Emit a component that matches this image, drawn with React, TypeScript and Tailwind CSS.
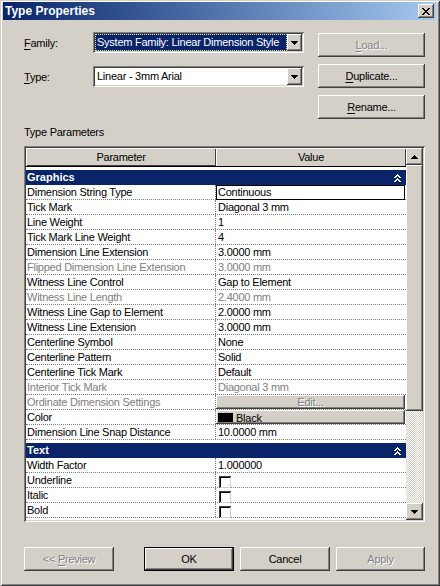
import React from "react";

const F = "font-['Liberation_Sans',Arial,sans-serif]";
const RAISED =
  "bg-[#d4d0c8] shadow-[inset_-1px_-1px_0_#404040,inset_1px_1px_0_#ffffff,inset_-2px_-2px_0_#808080]";
const SUNKEN =
  "shadow-[inset_1px_1px_0_#808080,inset_-1px_-1px_0_#ffffff,inset_2px_2px_0_#404040,inset_-2px_-2px_0_#d4d0c8]";
const DIS = "text-[#808080] [text-shadow:1px_1px_0_#ffffff]";

function DownTri() {
  return (
    <svg width="7" height="4" viewBox="0 0 7 4" shapeRendering="crispEdges">
      <path d="M0 0h7v1H0zM1 1h5v1H1zM2 2h3v1H2zM3 3h1v1H3z" fill="#000" />
    </svg>
  );
}

function UpTri() {
  return (
    <svg width="7" height="4" viewBox="0 0 7 4" shapeRendering="crispEdges">
      <path d="M3 0h1v1H3zM2 1h3v1H2zM1 2h5v1H1zM0 3h7v1H0z" fill="#000" />
    </svg>
  );
}

function CloseX() {
  return (
    <svg width="8" height="7" viewBox="0 0 8 7" shapeRendering="crispEdges">
      <path
        d="M0 0h2v1H0zM6 0h2v1H6zM1 1h2v1H1zM5 1h2v1H5zM2 2h4v1H2zM3 3h2v1H3zM2 4h4v1H2zM1 5h2v1H1zM5 5h2v1H5zM0 6h2v1H0zM6 6h2v1H6z"
        fill="#000"
      />
    </svg>
  );
}

function Chevrons() {
  return (
    <svg width="7" height="8" viewBox="0 0 7 8" shapeRendering="crispEdges">
      <path
        d="M3 0h1v1H3zM2 1h3v1H2zM1 2h2v1H1zM4 2h2v1H4zM0 3h2v1H0zM5 3h2v1H5zM3 4h1v1H3zM2 5h3v1H2zM1 6h2v1H1zM4 6h2v1H4zM0 7h2v1H0zM5 7h2v1H5z"
        fill="#fff"
      />
    </svg>
  );
}

type Row = {
  name: string;
  value?: string;
  dis?: boolean;
  kind?: "text" | "edit" | "color" | "check";
  focus?: boolean;
};

const graphics: Row[] = [
  { name: "Dimension String Type", value: "Continuous", focus: true },
  { name: "Tick Mark", value: "Diagonal 3 mm" },
  { name: "Line Weight", value: "1" },
  { name: "Tick Mark Line Weight", value: "4" },
  { name: "Dimension Line Extension", value: "3.0000 mm" },
  { name: "Flipped Dimension Line Extension", value: "3.0000 mm", dis: true },
  { name: "Witness Line Control", value: "Gap to Element" },
  { name: "Witness Line Length", value: "2.4000 mm", dis: true },
  { name: "Witness Line Gap to Element", value: "2.0000 mm" },
  { name: "Witness Line Extension", value: "3.0000 mm" },
  { name: "Centerline Symbol", value: "None" },
  { name: "Centerline Pattern", value: "Solid" },
  { name: "Centerline Tick Mark", value: "Default" },
  { name: "Interior Tick Mark", value: "Diagonal 3 mm", dis: true },
  { name: "Ordinate Dimension Settings", kind: "edit", dis: true },
  { name: "Color", kind: "color" },
  { name: "Dimension Line Snap Distance", value: "10.0000 mm" },
];

const textRows: Row[] = [
  { name: "Width Factor", value: "1.000000" },
  { name: "Underline", kind: "check" },
  { name: "Italic", kind: "check" },
  { name: "Bold", kind: "check" },
];

function Checkbox() {
  return (
    <div className="ml-[3px] mt-[3px] w-[12px] h-[12px] bg-white shadow-[inset_1px_1px_0_#404040,inset_-1px_-1px_0_#d4d0c8,inset_2px_2px_0_#000000]" />
  );
}

function GridRow({ r }: { r: Row }) {
  const txt = r.dis ? "text-[#808080]" : "text-black";
  let value: React.ReactNode = null;
  if (r.kind === "edit") {
    value = (
      <div className={`w-[189px] h-[14px] ${RAISED} text-center leading-[14px] ${DIS}`}>Edit...</div>
    );
  } else if (r.kind === "color") {
    value = (
      <div className={`w-[189px] h-[14px] ${RAISED} flex items-center pl-[2px]`}>
        <span className="w-[15px] h-[9px] bg-black" />
        <span className="ml-[3px] leading-[14px] pt-[1px]">Black</span>
      </div>
    );
  } else if (r.kind === "check") {
    value = <Checkbox />;
  } else {
    value = <div className={`pl-[2px] leading-[14px] whitespace-nowrap ${txt}`}>{r.value}</div>;
  }
  return (
    <div className="flex h-[15px] border-b border-dotted border-[#808080] bg-white">
      <div
        className={`w-[190px] shrink-0 border-r border-dotted border-[#808080] pl-[1px] leading-[14px] whitespace-nowrap overflow-hidden ${txt}`}
      >
        {r.name}
      </div>
      <div className="relative w-[190px] shrink-0">
        {value}
        {r.focus && <div className="absolute left-0 top-0 w-[189px] h-[15px] border border-black" />}
      </div>
    </div>
  );
}

function Category({ label }: { label: string }) {
  return (
    <div className="h-[18px] pt-[3px] bg-white">
      <div className="h-[15px] bg-[#0a246a] flex items-center justify-between pl-[1px] pr-[5px]">
        <span className="font-bold text-white leading-[15px] tracking-normal">{label}</span>
        <Chevrons />
      </div>
    </div>
  );
}

function Btn({
  children,
  className = "",
  disabled,
  def,
}: {
  children: React.ReactNode;
  className?: string;
  disabled?: boolean;
  def?: boolean;
}) {
  const sh = def
    ? "bg-[#d4d0c8] shadow-[inset_0_0_0_1px_#000000,inset_-2px_-2px_0_#404040,inset_2px_2px_0_#ffffff,inset_-3px_-3px_0_#808080]"
    : RAISED;
  return (
    <div className={`h-[24px] flex items-center justify-center ${sh} ${disabled ? DIS : "text-black"} ${className}`}>
      <span className="leading-[14px]">{children}</span>
    </div>
  );
}

function Combo({ text, selected }: { text: string; selected?: boolean }) {
  return (
    <div className={`w-[211px] h-[21px] bg-white ${SUNKEN} p-[2px] flex`}>
      {selected ? (
        <div className="flex-1 bg-[#0a246a] border border-dotted border-[#e8e2a8] text-white leading-[15px] pl-[1px] whitespace-nowrap overflow-hidden">
          {text}
        </div>
      ) : (
        <div className="flex-1 leading-[17px] pl-[2px] whitespace-nowrap overflow-hidden">{text}</div>
      )}
      <div className={`w-[15px] h-[17px] ${RAISED} flex items-center justify-center`}>
        <DownTri />
      </div>
    </div>
  );
}

function U({ children }: { children: React.ReactNode }) {
  return <span className="underline underline-offset-[2px]">{children}</span>;
}

export default function App() {
  return (
    <div
      className={`${F} text-[11px] tracking-[-0.25px] text-black w-[440px] h-[586px] bg-[#d4d0c8] shadow-[inset_1px_1px_0_#d4d0c8,inset_-1px_-1px_0_#404040,inset_2px_2px_0_#ffffff,inset_-2px_-2px_0_#808080] pt-[2px] pl-[3px] pr-[4px] overflow-hidden`}
    >
      {/* Title bar */}
      <div className="h-[18px] bg-linear-to-r from-[#0a246a] to-[#a6caf0] flex items-center justify-between pl-[2px] pr-[2px]">
        <span className="text-white font-bold text-[12px] tracking-normal leading-[18px]">Type Properties</span>
        <div className={`w-[16px] h-[14px] ${RAISED} flex items-center justify-center`}>
          <CloseX />
        </div>
      </div>

      <div className="pl-[21px] pr-[11px]">
        {/* Top section */}
        <div className="flex mt-[12px]">
          <div className="flex flex-col">
            <div className="flex items-center">
              <span className="w-[69px] leading-[14px]">
                <U>F</U>amily:
              </span>
              <Combo text="System Family: Linear Dimension Style" selected />
            </div>
            <div className="flex items-center mt-[13px]">
              <span className="w-[69px] leading-[14px]">
                <U>T</U>ype:
              </span>
              <Combo text="Linear - 3mm Arial" />
            </div>
          </div>
          <div className="ml-[14px] mt-[1px] flex flex-col gap-[7px] w-[107px]">
            <Btn disabled>
              <U>L</U>oad...
            </Btn>
            <Btn>
              <U>D</U>uplicate...
            </Btn>
            <Btn>
              <U>R</U>ename...
            </Btn>
          </div>
        </div>

        <div className="mt-[6px] leading-[14px]">Type Parameters</div>

        {/* Table */}
        <div className={`mt-[7px] h-[376px] bg-white ${SUNKEN} p-[2px] flex`}>
          <div className="w-[380px] flex flex-col overflow-hidden">
            <div className="flex h-[19px] border-b border-black shrink-0">
              <div className="w-[190px] bg-[#d4d0c8] shadow-[inset_1px_1px_0_#ffffff,inset_-1px_-1px_0_#404040] flex items-center justify-center leading-[14px]">
                Parameter
              </div>
              <div className="w-[190px] bg-[#d4d0c8] shadow-[inset_1px_1px_0_#ffffff,inset_-1px_0_0_#404040] flex items-center justify-center leading-[14px]">
                Value
              </div>
            </div>
            <Category label="Graphics" />
            {graphics.map((r) => (
              <GridRow key={r.name} r={r} />
            ))}
            <Category label="Text" />
            {textRows.map((r) => (
              <GridRow key={r.name} r={r} />
            ))}
          </div>
          <div className="w-[17px] flex flex-col">
            <div className={`h-[17px] ${RAISED} flex items-center justify-center`}>
              <UpTri />
            </div>
            <div className={`h-[246px] ${RAISED}`} />
            <div className="flex-1 bg-[repeating-conic-gradient(#ffffff_0_25%,#d4d0c8_0_50%)] bg-[length:2px_2px]" />
            <div className={`h-[17px] ${RAISED} flex items-center justify-center`}>
              <DownTri />
            </div>
          </div>
        </div>

        {/* Bottom buttons */}
        <div className="flex mt-[25px]">
          <Btn disabled className="w-[90px]">
            &lt;&lt; <U>P</U>review
          </Btn>
          <Btn def className="w-[90px] ml-[30px]">
            OK
          </Btn>
          <Btn className="w-[90px] ml-[6px]">Cancel</Btn>
          <Btn disabled className="w-[89px] ml-[6px]">
            Apply
          </Btn>
        </div>
      </div>
    </div>
  );
}
